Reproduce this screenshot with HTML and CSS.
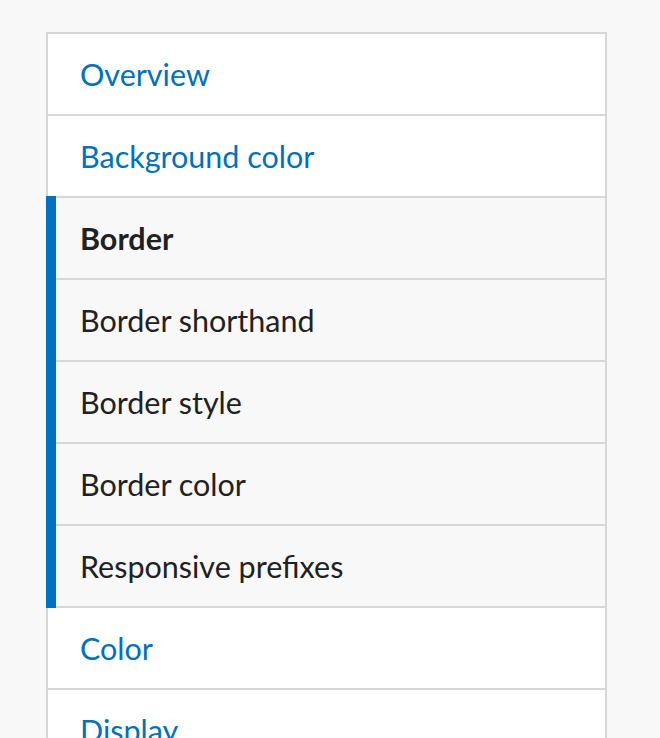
FILE: index.html
```html
<!DOCTYPE html>
<html lang="en">
<head>
<meta charset="utf-8">
<title>Side navigation</title>
<link rel="stylesheet" href="styles.css">
</head>
<body>
<nav class="page">
  <ul class="sidenav">
    <li class="item"><a class="link" href="#">Overview</a></li>
    <li class="item"><a class="link" href="#">Background color</a></li>
    <li class="item group">
      <a class="link current" href="#">Border</a>
      <ul class="sublist">
        <li class="subitem"><a class="sublink" href="#">Border shorthand</a></li>
        <li class="subitem"><a class="sublink" href="#">Border style</a></li>
        <li class="subitem"><a class="sublink" href="#">Border color</a></li>
        <li class="subitem"><a class="sublink" href="#">Responsive prefixes</a></li>
      </ul>
    </li>
    <li class="item"><a class="link" href="#">Color</a></li>
    <li class="item"><a class="link" href="#">Display</a></li>
  </ul>
</nav>
</body>
</html>
```
FILE: styles.css
```css
html, body {
  margin: 0;
  padding: 0;
  height: 738px;
  overflow: hidden;
  background: #f8f8f8;
}
body {
  font-family: Lato, "Liberation Sans", sans-serif;
}
.page {
  padding: 32px 0 0 46px;
}
.sidenav {
  list-style: none;
  margin: 0;
  padding: 0;
  width: 557px;
  border: 2px solid #d6d7d9;
  background: #ffffff;
}
.item {
  border-top: 2px solid #d6d7d9;
}
.item:first-child {
  border-top: 0;
}
.link, .sublink {
  display: block;
  height: 80px;
  line-height: 80px;
  padding-left: 32px;
  font-size: 30.5px;
  text-decoration: none;
  color: #0071bc;
}
.group {
  position: relative;
  background: #f8f8f8;
}
.group::before {
  content: "";
  position: absolute;
  left: -2px;
  top: -2px;
  bottom: -2px;
  width: 10px;
  background: #0071bc;
  z-index: 1;
}
.current {
  color: #212121;
  font-weight: 700;
}
.sublist {
  list-style: none;
  margin: 0;
  padding: 0;
}
.subitem {
  border-top: 2px solid #d6d7d9;
}
.sublink {
  color: #212121;
}
```
